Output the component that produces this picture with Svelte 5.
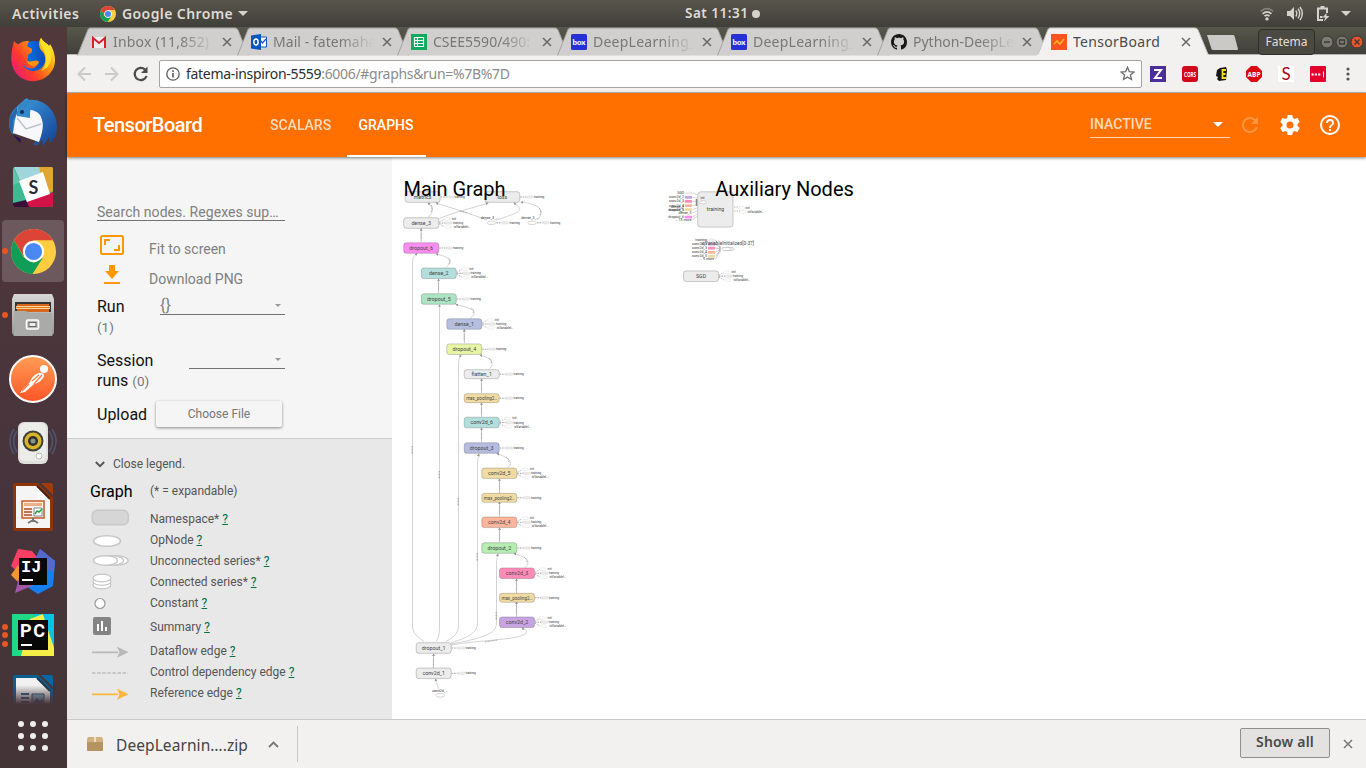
<script>
  const tabs = [
    { icon: 'gmail', title: 'Inbox (11,852) - fatema', ls: 0.2 },
    { icon: 'outlook', title: 'Mail - fatemahasan', ls: 0.05 },
    { icon: 'sheets', title: 'CSEE5590/490: Python', ls: 0 },
    { icon: 'box', title: 'DeepLearning_Lesson', ls: 0.25 },
    { icon: 'box', title: 'DeepLearning_Lesson', ls: 0.25 },
    { icon: 'github', title: 'Python-DeepLearning', ls: 0 },
    { icon: 'tensor', title: 'TensorBoard', ls: 0.3, active: true }
  ];

  const nodes = [
    { t: 'metrics', x: 422.7, y: 197, c: '#ececec', k: 1 },
    { t: 'loss', x: 502.3, y: 197, c: '#ececec', k: 1 },
    { t: 'dense_3', x: 421.2, y: 223, c: '#ececec', k: 3 },
    { t: 'dropout_6', x: 421.2, y: 248, c: '#fb8df0', k: 1 },
    { t: 'dense_2', x: 438.8, y: 273.3, c: '#b2dfdd', k: 3 },
    { t: 'dropout_5', x: 438.8, y: 299, c: '#ade5c4', k: 1 },
    { t: 'dense_1', x: 464.3, y: 324, c: '#b6bfdf', k: 3 },
    { t: 'dropout_4', x: 464.3, y: 349.2, c: '#e7f5a6', k: 1 },
    { t: 'flatten_1', x: 481.7, y: 374.2, c: '#ececec', k: 1, h: 9 },
    { t: 'max_pooling2…', x: 481.7, y: 398.2, c: '#f0dca3', k: 1, h: 9 },
    { t: 'conv2d_6', x: 481.7, y: 422.5, c: '#b2dfdd', k: 3 },
    { t: 'dropout_3', x: 481.7, y: 448, c: '#b5bce0', k: 1 },
    { t: 'conv2d_5', x: 499.3, y: 473.3, c: '#f0dca3', k: 3 },
    { t: 'max_pooling2…', x: 499.3, y: 497.8, c: '#f0dca3', k: 1, h: 9 },
    { t: 'conv2d_4', x: 499.3, y: 522.3, c: '#ffb59c', k: 3 },
    { t: 'dropout_2', x: 499.3, y: 548, c: '#b5edb2', k: 1 },
    { t: 'conv2d_3', x: 517, y: 573.2, c: '#ff8cb8', k: 3 },
    { t: 'max_pooling2…', x: 517, y: 597.8, c: '#f0dca3', k: 1, h: 9 },
    { t: 'conv2d_2', x: 517, y: 622.2, c: '#c8a5e2', k: 3 },
    { t: 'dropout_1', x: 433.7, y: 648, c: '#ececec', k: 1 },
    { t: 'conv2d_1', x: 433.7, y: 673.3, c: '#ececec', k: 1 },
    { t: 'SGD', x: 701, y: 276.2, c: '#ececec', k: 3 }
  ];

  const straight = [
    [421.2, 242, 228.5], [438.5, 293, 279], [464.3, 343, 329.5],
    [481.5, 393, 379], [481.5, 416.5, 403], [481.5, 442, 428],
    [499.5, 493, 479], [499.5, 516.5, 502], [499.5, 542, 528],
    [516.5, 593, 579], [516.5, 616.5, 602], [433.5, 668, 654]
  ];

  const curves = [
    'M428 217.5 C434 211 434 208 428 203',
    'M438 219 C460 210 474 208 488 203',
    'M487 220 C468 213 455 209 436 203',
    'M496 220 C526 211 522 209 514 203',
    'M537 220 C546 211 540 204 521 202',
    'M446 267.5 C453 261 450 257 436 254',
    'M470 318.5 C480 311 471 308 456 304.5',
    'M489 369.5 C496 362 490 358 480 355',
    'M508 467.5 C515 461 506 457 497 453.5',
    'M525 567.5 C532 561 526 557 514 553.5',
    'M424 641.5 C416 636 412.5 632 412.5 626 L412.5 264 C412.5 258 414 256 417 253.5',
    'M436 641.5 C439 638 439.5 632 439.5 626 L439.5 305',
    'M446 641.5 C456 636 458.5 632 458.5 624 L458.5 368 C458.5 360 459 358 461 355',
    'M451 643 C472 636 477.5 632 477.5 622 L477.5 468 C477.5 460 478 457 479 454',
    'M451 644 C490 637 496.5 632 496.5 622 L496.5 568 C496.5 560 497 557 498 554',
    'M451 645 C480 640 517 640 525 634 C529 630 525 630 522 628',
    'M440 692 C437 684 436 682 435.5 679'
  ];

  const edgeMarks = [[412.2, 450], [439.2, 475], [458.2, 502], [477.2, 557], [496.2, 616]];

  const auxA = [
    ['SGD', 193, '#ececec'], ['conv2d_2', 197.3, '#c8a5e2'], ['conv2d_3', 201.3, '#ff8cb8'],
    ['conv2d_4', 205.5, '#ffb59c'], ['conv2d_5', 209.5, '#f0dca3'], ['dense_3', 213, ''],
    ['dropout_6', 217, '#fb8df0'], ['... 15 more', 220, '']
  ];
  const auxB = [
    ['training', 240, '#ececec'], ['conv2d_2', 244, '#c8a5e2'], ['conv2d_3', 248, '#ff8cb8'],
    ['conv2d_4', 252.3, '#ffb59c'], ['conv2d_5', 256.3, '#f0dca3'], ['... 5 more', 259.3, '']
  ];

  const legend = [
    ['ns', 'Namespace*'], ['op', 'OpNode'], ['un', 'Unconnected series*'], ['co', 'Connected series*'],
    ['ct', 'Constant'], ['su', 'Summary'], ['df', 'Dataflow edge'], ['cd', 'Control dependency edge'], ['re', 'Reference edge']
  ];
</script>

{#snippet chromeLogo(s)}
  <svg width={s} height={s} viewBox="0 0 44 44">
    <circle cx="22" cy="22" r="22" fill="#ffcd40" />
    <path d="M22 11 H41 A22 22 0 0 0 3 11 L12.5 27Z" fill="#db4437" />
    <path d="M3 11 A22 22 0 0 0 21 44 L31.5 27.5 22 33 12.5 27.5Z" fill="#0f9d58" />
    <circle cx="22" cy="22" r="10.4" fill="#fff" />
    <circle cx="22" cy="22" r="8.4" fill="#4a89f3" />
  </svg>
{/snippet}

{#snippet closeX(c)}
  <svg width="10" height="10" viewBox="0 0 10 10"><path d="M1 1 L9 9 M9 1 L1 9" stroke={c} stroke-width="1.5" fill="none" /></svg>
{/snippet}

<div class="desktop">
  <header class="topbar">
    <span class="activities">Activities</span>
    <span class="logo">{@render chromeLogo(16)}</span>
    <span class="appname">Google Chrome</span>
    <i class="caret"></i>
    <div class="clock">Sat 11:31<i></i></div>
    <div class="tray">
      <svg width="14" height="14" viewBox="0 0 14 14" fill="none" stroke="#d4d2ce" stroke-width="1.7">
        <path d="M.8 4.4 Q7 -1 13.2 4.4" opacity=".4" /><path d="M2.6 6.8 Q7 3 11.4 6.8" /><path d="M4.5 9.2 Q7 7 9.5 9.2" /><circle cx="7" cy="11.9" r="1.7" fill="#d4d2ce" stroke="none" />
      </svg>
      <svg width="16" height="15" viewBox="0 0 16 15" fill="none" stroke="#d4d2ce" stroke-width="1.4">
        <path d="M0 5h3l4-4v13L3 10H0z" fill="#d4d2ce" stroke="none" /><path d="M8.8 4.5q2 3 0 6M11 2.7q3.4 4.8 0 9.6M13 1q4.6 6.500 0 13" />
      </svg>
      <svg width="14" height="17" viewBox="0 0 14 17" fill="none" stroke="#d4d2ce" stroke-width="2">
        <path d="M7 15H2V3.500h9V8M4.500 2h4" /><path d="M10.500 8 6.500 12.500h2.800l-1.500 4 5.700-5.500h-3z" fill="#d4d2ce" stroke="none" /><path d="M4 12h2.500" />
      </svg>
      <i class="caret"></i>
    </div>
  </header>

  <nav class="dock">
    <div class="app">
      <svg width="46" height="46" viewBox="0 0 46 46">
        <defs>
          <linearGradient id="fx" x1="0" y1=".9" x2="1" y2=".2"><stop offset="0" stop-color="#e31587" /><stop offset=".35" stop-color="#ff3a2d" /><stop offset=".7" stop-color="#ff9a0b" /><stop offset="1" stop-color="#fff23a" /></linearGradient>
          <linearGradient id="fb"><stop offset="0" stop-color="#0a84ff" /><stop offset="1" stop-color="#0a3fa8" /></linearGradient>
        </defs>
        <circle cx="24" cy="22" r="17" fill="url(#fb)" />
        <path d="M4 5 C6 7 8 9 9 8 C12 5 16 5 19 5 L17 10 22 13 22 16 18 19 18 22 C14 27 24 31 28 28 C24 36 13 32 13 26 C12 33 22 37 28 34 C36 31 38 20 31 14 C28 10 29 4 31 2 C33 6 37 7 39 10 L40 8 C46 17 47 29 41 36 C32 49 11 48 4 34 C-1 24 2 13 4 5Z" fill="url(#fx)" />
        <path d="M31 2 C28 9 36 14 36 22 C36 28 34 32 31 35 C43 31 43 18 39 10 C37 7 33 6 31 2Z" fill="#ffe226" />
        <path d="M16 24 C21 28 25 22 29 26 C28 31 19 32 16 24Z" fill="#ff930f" />
      </svg>
    </div>
    <div class="app">
      <svg width="50" height="50" viewBox="0 0 50 50">
        <defs><linearGradient id="tb" x1="0" y1="0" x2="1" y2="1"><stop offset="0" stop-color="#3fa4e6" /><stop offset="1" stop-color="#123f93" /></linearGradient></defs>
        <path d="M1 24 C2 11 12 7 17 1 C20 0 21 1 20 2 C36 0 49 13 49 29 C49 38 45 43 41 45 L41 39 35 48 34 41 30 47 H25 L34 35 4 36 C2 33 1 29 1 24Z" fill="url(#tb)" />
        <path d="M10 9 C18 12 32 10 34 22 C36 28 34 36 31 44 L5 35 7 22 9 15Z" fill="#f8f8fa" />
        <path d="M1 23 C2 17 6 13 9 9 L9 15 5 22 5 35 C3 34 1 29 1 23Z" fill="#2466b0" />
        <path d="M9 20 18 31 33 26" fill="none" stroke="#bbc2ce" stroke-width="1.5" />
        <path d="M9 18 C8 7 15 2 20 2 L31 3 C22 7 22 12 22 20 17 18Z" fill="#3488ca" />
        <circle cx="14" cy="14" r="2" fill="#102f52" /><path d="M5 37 13 41 12 45Z" fill="#251457" />
      </svg>
    </div>
    <div class="app">
      <svg width="40" height="40" viewBox="0 0 40 40">
        <defs><clipPath id="sl"><rect width="40" height="40" rx="2" /></clipPath></defs>
        <g clip-path="url(#sl)"><path fill="#3eb991" d="M0 0h40v40H0z" /><path d="M1 0H28L32 10 8 16Z" fill="#9ed6dc" /><path d="M26 0h14v24l-7 3z" fill="#dfa630" /><path d="M14 34 40 25v15H13z" fill="#d21347" /><path d="M0 36 13 33 16 40H0z" fill="#380d38" /><path d="M0 0 7 15 0 18z" fill="#60c4aa" /><path d="M6 14 30 5 37 27 14 35z" fill="#fff" /></g>
        <text x="20.500" y="26.500" text-anchor="middle" class="slack">S</text>
      </svg>
    </div>
    <div class="app selected"><b class="dots"><i></i></b>{@render chromeLogo(45)}</div>
    <div class="app"><b class="dots"><i></i></b>
      <svg width="42" height="44" viewBox="0 0 42 44">
        <defs><linearGradient id="fi" x2="0" y2="1"><stop offset="0" stop-color="#d8d8d8" /><stop offset="1" stop-color="#969696" /></linearGradient></defs>
        <path d="M2 1h38l2 5v34l-2 3H2l-2-3V6z" fill="url(#fi)" /><path d="M3 9h36v10H3z" fill="#353535" /><path d="M5 11h32v8H5z" fill="#d6661a" /><path d="M4 13h34v3H4z" fill="#ffd59c" /><path d="M4 14.500h34" stroke="#ee7a22" /><path d="M2 18h12l4 2h22v23H2z" fill="#aaaaa9" /><rect x="14.500" y="27" width="12" height="9" rx="1.500" fill="#bbb" stroke="#fff" stroke-width="1.600" /><rect x="17" y="29.500" width="7" height="4" fill="#eee" stroke="#666" />
      </svg>
    </div>
    <div class="app">
      <svg width="48" height="48" viewBox="0 0 48 48">
        <defs><linearGradient id="po" x2="0" y2="1"><stop offset="0" stop-color="#ff9e55" /><stop offset="1" stop-color="#ff5527" /></linearGradient></defs>
        <circle cx="24" cy="24" r="23" fill="url(#po)" stroke="#fff" stroke-width="2" /><circle cx="35" cy="14" r="4" fill="#fff" /><path d="M32 18 C27 17 22 23 21 27 L13 35 11 38 16 37 25 29 C31 28 36 22 35 19Z" fill="#fff" /><path d="M33 20 25 29 M30 20 23 26 M20 29 13 36" stroke="#ff793f" stroke-width="1.200" />
      </svg>
    </div>
    <div class="app">
      <svg width="50" height="44" viewBox="0 0 50 44">
        <path d="M6 8Q-2 20 6 33M9 10Q2 20 9 31M44 8q8 12 0 25M41 10q7 10 0 21" fill="none" stroke="#4d6583" stroke-width="1.500" opacity=".7" /><rect x="10" y="1" width="30" height="42" rx="6" fill="#dfdfdc" /><rect x="12" y="2" width="26" height="38" rx="5" fill="#ecece9" /><circle cx="25" cy="20" r="10.500" fill="#404040" /><circle cx="25" cy="20" r="8.500" fill="#d8b528" /><circle cx="25" cy="20" r="5" fill="#31312e" /><circle cx="25" cy="20" r="2.500" fill="#88958c" /><circle cx="31" cy="35" r="3" fill="#fff" stroke="#bbb" />
      </svg>
    </div>
    <div class="app">
      <svg width="40" height="48" viewBox="0 0 40 48">
        <path d="M2 0h23l15 15v33H2q-2 0-2-2V2q0-2 2-2z" fill="#8e3507" /><path d="M28 0h10q2 0 2 2v10z" fill="#9e3c0c" /><path d="M3 3h21l13 13v29H3z" fill="#f5f5f5" /><path d="M24 3v13h13z" fill="#fff" /><path d="m24 3 13 13" stroke="#472018" stroke-width="2" /><path d="M9 18h22v17H9z" fill="#fff1e9" stroke="#c85722" stroke-width="1.500" /><path d="M11 20h18v3H11z" fill="#edb086" /><path d="M11 26h8m-8 3h8m-8 3h8" stroke="#a94d25" stroke-width="1.500" /><path d="M21 25h8v8h-8z" fill="#fff" stroke="#789" /><path d="m22 31 2-3 2 1 3-3" stroke="#28a23d" stroke-width="1.500" fill="none" /><path d="M20 35v2m0 0-5 3m5-3 5 3" stroke="#777" stroke-width="2" />
      </svg>
    </div>
    <div class="app">
      <svg width="46" height="46" viewBox="0 0 46 46">
        <path d="M1 18 8 1 22 3 28 10 15 30z" fill="#ff3e66" /><path d="M8 17 1 27 8 34 12 25z" fill="#f39632" /><path d="M30 1 45 13 43 38 28 46 14 37z" fill="#167ff0" /><path d="M30 1 45 13 44 23 20 22z" fill="#5369ce" /><path d="M10 26 5 45 24 37z" fill="#a457a7" /><path d="M9 10h28v27H9z" fill="#080808" /><text x="11" y="24" class="jb mono">IJ</text><path d="M12 32h11" stroke="#fff" stroke-width="2" />
      </svg>
    </div>
    <div class="app"><b class="dots"><i></i><i></i><i></i></b>
      <svg width="42" height="42" viewBox="0 0 42 42">
        <path fill="#21d789" d="M0 0h42v42H0z" /><path d="M21 0h21v30z" fill="#09ccd4" /><path d="M18 5 31 0 42 32v10H9z" fill="#f5ed48" /><path d="M31 0h11v34z" fill="#07c3e8" /><path d="M6 6h30v30H6z" fill="#080808" /><text x="8" y="22.500" class="jb" textLength="25">PC</text><path d="M9 31h11" stroke="#fff" stroke-width="2" />
      </svg>
    </div>
    <div class="peek">
      <svg width="40" height="29" viewBox="0 0 40 29">
        <defs><linearGradient id="wf" x2="0" y2="1"><stop offset=".35" stop-color="#47343a" stop-opacity="0" /><stop offset="1" stop-color="#47343a" /></linearGradient></defs>
        <path d="M2 0h23l15 15v14H0V2q0-2 2-2z" fill="#0c5f92" /><path d="M28 0h10q2 0 2 2v10z" fill="#0767a3" /><path d="M3 3h21l13 13v13H3z" fill="#f1f1f1" /><path d="m24 3 13 13" stroke="#253746" stroke-width="2" /><path d="M8 19h8m-8 4h8m-8 4h8" stroke="#245d8a" stroke-width="2" /><path d="M19 19h12v10H19z" fill="#8cc0dc" stroke="#26577a" /><path d="m20 28 4-5 3 3 2-2 2 4z" fill="#34495b" /><path d="M0 0h40v29H0z" fill="url(#wf)" />
      </svg>
    </div>
    <div class="grid9">{#each Array(9) as _}<i></i>{/each}</div>
  </nav>

  <main class="browser">
    <div class="tabstrip">
      {#each tabs as t}
        <div class="tab" class:active={t.active}>
          <svg class="shape" width="174" height="29" viewBox="0 0 174 29">
            <path d="M0.500 28.500 L11 2.500 Q12 1 13 1 H158 Q160 1 161 3 L171.500 28.500" fill={t.active ? '#f2f1f0' : '#d1cfcd'} stroke={t.active ? '#c5c3c0' : '#a4a29e'} />
            {#if t.active}<path d="M0 27.500h172v1.500H0z" fill="#f2f1f0" />{/if}
          </svg>
          <span class="fav">
            {#if t.icon === 'gmail'}
              <svg width="16" height="16"><path d="M1 3h14v11H1z" fill="#eee" /><path d="M2 14V4L8 9l6-5v10" fill="none" stroke="#d9202f" stroke-width="2" /></svg>
            {:else if t.icon === 'outlook'}
              <svg width="16" height="16"><path d="M8 3h7.500v10H8z" fill="#fff" stroke="#0a5fc4" /><path d="M0 1.500 10 0v16L0 14.500z" fill="#0557bd" /><ellipse cx="5" cy="8" rx="2.100" ry="3" fill="none" stroke="#fff" stroke-width="1.500" /><path d="m9 6 2.500 3L15 5" fill="none" stroke="#0a5fc4" stroke-width="1.300" /></svg>
            {:else if t.icon === 'sheets'}
              <svg width="16" height="16"><path fill="#0faa5b" d="M0 0h16v16H0z" /><path d="M3.500 3.500h9v9h-9zm3 0v9M3.500 6.500h9m-9 3h9" fill="none" stroke="#fff" stroke-width="1.200" /></svg>
            {:else if t.icon === 'box'}
              <svg width="16" height="16"><rect width="16" height="16" rx="1.500" fill="#2531d4" /><text x="1.500" y="11" class="boxt" textLength="13" lengthAdjust="spacingAndGlyphs">box</text></svg>
            {:else if t.icon === 'github'}
              <svg width="16" height="16" viewBox="0 0 16 16"><path fill="#191717" d="M8 0C3.580 0 0 3.580 0 8c0 3.540 2.290 6.530 5.470 7.590.4.070.550-.170.550-.380 0-.190-.010-.820-.010-1.490-2.010.370-2.530-.490-2.690-.940-.090-.230-.480-.940-.820-1.130-.280-.150-.680-.520-.010-.530.630-.010 1.080.580 1.230.820.720 1.210 1.870.870 2.330.660.070-.520.280-.870.510-1.070-1.780-.200-3.640-.890-3.640-3.950 0-.870.310-1.590.820-2.150-.080-.200-.360-1.020.080-2.120 0 0 .670-.210 2.200.820.640-.180 1.320-.270 2-.270s1.360.090 2 .270c1.530-1.040 2.200-.820 2.200-.820.440 1.100.160 1.920.080 2.120.510.560.820 1.270.820 2.150 0 3.070-1.870 3.750-3.650 3.950.290.250.540.730.540 1.480 0 1.070-.010 1.930-.010 2.200 0 .210.150.460.550.380A8.010 8.010 0 0 0 16 8c0-4.420-3.580-8-8-8z" /></svg>
            {:else}
              <svg width="16" height="16"><path fill="#ff5322" d="M0 0h16v16H0z" /><path d="m3 10 3-3 3 3 4-5" fill="none" stroke="#ffb61c" stroke-width="1.700" /></svg>
            {/if}
          </span>
          <span class="title" style:letter-spacing="{t.ls}px">{t.title}</span>
          <span class="x">{@render closeX('#686868')}</span>
        </div>
      {/each}
      <svg class="newtab" width="33" height="17"><path d="M1 1h26q1 0 1.500 1L32 15q0 1-1 1H7q-1 0-1.500-1z" fill="#cbc9c6" /></svg>
      <span class="user">Fatema</span>
      <svg class="wm" width="44" height="14" viewBox="0 0 44 14"><g stroke="#383732"><circle cx="7" cy="7" r="6" fill="#7b7973" /><circle cx="22" cy="7" r="6" fill="#7b7973" /><circle cx="37" cy="7" r="6" fill="#e9532d" /></g><path d="M4 7h6M19.500 5h5v4h-5zM34.500 4.500l5 5m0-5-5 5" fill="none" stroke="#3d3a34" stroke-width="1.300" /></svg>
    </div>

    <div class="toolbar">
      <svg class="nav" width="84" height="20" viewBox="0 0 84 20" fill="none">
        <path d="M18 10H5.500M12 3.500 5.500 10 12 16.500" stroke="#cccac9" stroke-width="2" /><path d="M32 10h12.500M38 3.500 44.500 10 38 16.500" stroke="#cccac9" stroke-width="2" /><path d="M72 5.500A6.100 6.100 0 1 0 73.600 12" stroke="#4c4b4a" stroke-width="2.200" /><path d="M74.500 2.500V9H68z" fill="#4c4b4a" />
      </svg>
      <div class="omni">
        <svg width="14" height="14" viewBox="0 0 14 14"><circle cx="7" cy="7" r="6.200" fill="none" stroke="#5a5a5a" stroke-width="1.300" /><path d="M7 6v4.500M7 3.300V5" stroke="#5a5a5a" stroke-width="1.600" /></svg>
        <span class="url"><b>fatema-inspiron-5559</b>:6006/#graphs&run=%7B%7D</span>
        <svg width="15" height="15" viewBox="0 0 15 15"><path d="m7.500 1.300 1.800 4.300 4.700.4-3.600 3 1.100 4.500-4-2.400-4 2.400L4.600 9 1 6l4.700-.4z" fill="none" stroke="#6e6e6e" stroke-width="1.300" /></svg>
      </div>
      <div class="exts">
        <svg width="16" height="16"><path fill="#4b2e9b" d="M0 0h16v16H0z" /><path d="M4 4h7L5 12h7" fill="none" stroke="#fff" stroke-width="2" /></svg>
        <svg width="16" height="16"><rect width="16" height="16" rx="3" fill="#d3081b" /><text x="8" y="10.500" text-anchor="middle" class="ext" textLength="12" lengthAdjust="spacingAndGlyphs">CORS</text></svg>
        <svg width="16" height="16"><path d="M6 2 12 1l1 3-1 10-7 1-2-2 1-2-2-1 1-6z" fill="#171717" /><path d="M12 4H8.500v8H12M8.500 8h3" fill="none" stroke="#f8df1a" stroke-width="1.800" /></svg>
        <svg width="16" height="16"><path d="M5 0h6l5 5v6l-5 5H5l-5-5V5z" fill="#d90813" /><text x="8" y="11" text-anchor="middle" class="ext" textLength="13" lengthAdjust="spacingAndGlyphs">ABP</text></svg>
        <svg width="16" height="16"><path fill="#fff" d="M0 0h16v16H0z" /><text x="8" y="14" text-anchor="middle" class="exs">S</text></svg>
        <svg width="16" height="16"><rect width="16" height="16" rx="1" fill="#e4002b" /><path d="M1.500 8.500h2.200m1.100 0H7m1.100 0h2.200" stroke="#fff" stroke-width="2.200" /><path d="M13.500 5.500v6" stroke="#fff" /></svg>
      </div>
      <svg class="kebab" width="4" height="14" fill="#555"><circle cx="2" cy="2" r="1.600" /><circle cx="2" cy="7" r="1.600" /><circle cx="2" cy="12" r="1.600" /></svg>
    </div>

    <div class="tbhead">
      <h1>TensorBoard</h1>
      <span class="ttab">SCALARS</span>
      <span class="ttab on">GRAPHS</span>
      <div class="reload"><span>INACTIVE</span><i></i></div>
      <svg width="24" height="24" viewBox="0 0 24 24" fill="#fff" opacity=".26"><path d="M17.650 6.350A7.960 7.960 0 0 0 12 4a8 8 0 1 0 7.730 10h-2.080A6 6 0 1 1 12 6c1.660 0 3.140.690 4.220 1.780L13 11h7V4z" /></svg>
      <svg width="24" height="24" viewBox="0 0 24 24" fill="#fff"><path d="M19.430 12.980c.040-.320.070-.640.070-.980s-.030-.660-.070-.980l2.110-1.650c.190-.150.240-.420.120-.640l-2-3.460c-.120-.220-.390-.300-.610-.220l-2.490 1c-.520-.400-1.080-.730-1.690-.980l-.380-2.650A.488.488 0 0 0 14 2h-4c-.250 0-.460.180-.490.420l-.380 2.650c-.610.250-1.170.590-1.690.980l-2.490-1c-.230-.090-.490 0-.610.220l-2 3.460c-.130.220-.070.490.120.640l2.110 1.650c-.040.320-.070.650-.070.980s.030.660.070.980l-2.110 1.650c-.190.150-.240.420-.120.640l2 3.460c.120.220.390.300.610.220l2.490-1c.520.400 1.080.730 1.690.980l.380 2.650c.030.240.240.420.490.420h4c.250 0 .460-.180.490-.420l.380-2.650c.610-.250 1.170-.590 1.690-.980l2.490 1c.230.090.490 0 .610-.220l2-3.460c.120-.220.070-.490-.120-.640zM12 15.500a3.500 3.500 0 1 1 0-7 3.500 3.500 0 0 1 0 7z" /></svg>
      <svg width="24" height="24" viewBox="0 0 24 24" fill="#fff"><path d="M11 18h2v-2h-2zm1-16a10 10 0 1 0 0 20 10 10 0 0 0 0-20zm0 18a8 8 0 1 1 0-16 8 8 0 0 1 0 16zm0-14a4 4 0 0 0-4 4h2a2 2 0 1 1 4 0c0 2-3 1.750-3 5h2c0-2.250 3-2.500 3-5a4 4 0 0 0-4-4z" /></svg>
    </div>

    <div class="body">
      <aside>
        <section class="controls">
          <div class="search">Search nodes. Regexes sup…</div>
          <div class="action"><span class="ic"><svg width="24" height="20" viewBox="0 0 24 20"><rect x="1" y="1" width="22" height="18" rx="1.500" fill="none" stroke="#ff9800" stroke-width="2" /><path d="M5 10V5h5M19 10v5h-5" fill="none" stroke="#ff9800" stroke-width="2" /></svg></span><span>Fit to screen</span></div>
          <div class="action"><span class="ic dl"><svg width="16" height="20" viewBox="0 0 16 20" fill="#ff9800"><path d="M5 0h6v6h4l-7 8-7-8h4zM0 17h16v2H0z" /></svg></span><span>Download PNG</span></div>
          <div class="field run"><div class="lab">Run<br /><small>(1)</small></div><div class="select w1">{'{}'}<i></i></div></div>
          <div class="field ses"><div class="lab">Session<br />runs <small>(0)</small></div><div class="select w2"><i></i></div></div>
          <div class="upload"><span>Upload</span><button>Choose File</button></div>
        </section>
        <section class="legend">
          <div class="close"><svg width="10" height="7" viewBox="0 0 10 7"><path d="m.800 1 4.200 4.200L9.200 1" fill="none" stroke="#555" stroke-width="1.800" /></svg>Close legend.</div>
          <div class="ghead"><b>Graph</b><span>(* = expandable)</span></div>
          {#each legend as [k, label]}
            <div class="row" class:tall={k === 'su'}>
              <svg width="42" height="21" viewBox="0 0 42 21">
                {#if k === 'ns'}<rect x="2.300" y="1.200" width="36" height="14.600" rx="5" fill="#d6d6d6" stroke="#c8c8c8" stroke-width="1.500" />
                {:else if k === 'op'}<ellipse cx="17" cy="11" rx="13.500" ry="5.300" fill="#fff" stroke="#c8c8c8" stroke-width="1.600" />
                {:else if k === 'un'}{#each [26, 21.500, 15.500] as cx}<ellipse {cx} cy="9.500" rx="12" ry="4.700" fill="#fff" stroke="#c8c8c8" stroke-width="1.400" />{/each}
                {:else if k === 'co'}{#each [13, 9.500, 6] as cy}<ellipse cx="12" {cy} rx="9" ry="3.800" fill="#fff" stroke="#c4c4c4" stroke-width="1.200" />{/each}
                {:else if k === 'ct'}<circle cx="10" cy="10.500" r="5" fill="#fff" stroke="#999" stroke-width="1.200" />
                {:else if k === 'su'}<rect x="3" y="0" width="18" height="18" rx="2" fill="#848484" /><path d="M8 7v7m4-10v10m4-4v4" stroke="#fff" stroke-width="2" />
                {:else if k === 'cd'}<path d="M2 11h36" stroke="#bcbcbc" stroke-width="1.500" stroke-dasharray="3.500 1.600" />
                {:else}<g fill={k === 'df' ? '#b8b8b8' : '#ffb43a'}><path d="M2 10.500h26v1.700H2z" /><path d="m27 5.800 11.500 5.500L27 16.800l2.500-5.500z" /></g>{/if}
              </svg>
              <span>{label} <u>?</u></span>
            </div>
          {/each}
        </section>
      </aside>

      <svg class="graph" viewBox="392 157 974 562" width="974" height="562">
        <defs><marker id="ar" viewBox="0 0 4 4" refX="3" refY="2" markerWidth="3" markerHeight="3" markerUnits="userSpaceOnUse" orient="auto"><path d="M0 0 4 2 0 4z" fill="#999" /></marker></defs>
        <g fill="none" stroke="#c8c8c8" stroke-width=".8">
          {#each curves as d}<path {d} marker-end="url(#ar)" />{/each}
          {#each straight as [x, a, b]}<path d="M{x} {a}V{b}" stroke="#b4b4b4" marker-end="url(#ar)" /><path d="M{x} {a - 3}V{b + 4}" stroke="#999" stroke-width="1.200" stroke-dasharray="1 .6" opacity=".5" />{/each}
          {#each edgeMarks as [x, y]}<path d="M{x} {y - 4}v8" stroke="#999" stroke-width="1" stroke-dasharray="1 .5" />{/each}
          <path d="M431 212q2-4 0-7M460 211l8 2M485 642l12-2M449 264q3-3-1-6M473 313q2-3-2-5M491 363q1-3-2-5M509 462q0-3-3-5M527 562q0-3-3-5M540 215q2-4-1-7" stroke="#999" stroke-dasharray="1 .6" stroke-width=".9" />
        </g>
        {#each nodes as n}
          {@const h = n.h ?? 10.6}
          <rect x={n.x - 17.500} y={n.y - h / 2} width="35" height={h} rx="2.600" fill={n.c} stroke="#000" stroke-opacity=".24" stroke-width=".8" />
          <text x={n.x} y={n.y + 1.700} class="nt" text-anchor="middle" font-size={n.h && n.t[0] === 'm' ? 4.500 : 5.300}>{n.t}</text>
          <path d="M{n.x + 18} {n.y}h6" stroke="#777" stroke-width=".7" stroke-dasharray="1.500 1" />
          <rect x={n.x + 24} y={n.y - 1.100} width="7" height="2.200" rx=".8" fill="#eee" stroke="#ccc" stroke-width=".4" />
          <text x={n.x + 31.700} y={n.y + 1} class="mini">training</text>
          {#if n.k === 3}
            <path d="M{n.x + 18} {n.y - 1}l5-2.800M{n.x + 18} {n.y + 1}l5 2.800" stroke="#888" stroke-width=".6" stroke-dasharray="1.500 1" />
            <ellipse cx={n.x + 26} cy={n.y - 4} rx="3.300" ry="1.400" class="ov" /><ellipse cx={n.x + 27} cy={n.y + 4} rx="3.300" ry="1.400" class="ov" />
            <text x={n.x + 30.500} y={n.y - 3.200} class="mini">init</text><text x={n.x + 32.500} y={n.y + 5} class="mini">isVariableI…</text>
          {/if}
        {/each}
        {#each [[491.500, 222.800], [532, 222.800]] as [x, y]}
          <text x={x - 2} y={y - 4} text-anchor="middle" class="mini big">dense_3_…</text><ellipse cx={x} cy={y} rx="4.300" ry="1.800" class="ov dk" />
          <path d="M{x + 5} {y}h5" stroke="#777" stroke-width=".7" stroke-dasharray="1.500 1" /><rect x={x + 10} y={y - 1.100} width="7" height="2.200" rx=".8" fill="#eee" stroke="#ccc" stroke-width=".4" /><text x={x + 18} y={y + 1} class="mini">training</text>
        {/each}
        <text x="440" y="692.300" text-anchor="middle" class="mini big">conv2d_…</text><ellipse cx="440.300" cy="695.300" rx="4.400" ry="1.900" class="ov dk" />

        <rect x="697.700" y="191.800" width="35.300" height="35.300" rx="3" fill="#ececec" stroke="#bdbdbd" stroke-width=".8" />
        <text x="715.500" y="211" text-anchor="middle" class="nt" font-size="5.200">training</text>
        <text x="702.500" y="198.800" text-anchor="middle" class="mini">init</text><ellipse cx="703" cy="202.300" rx="3.500" ry="1.500" class="ov dk" />
        {#each auxA as [t, y, c]}
          {#if c}<rect x="684.800" y={y - 1.200} width="7.200" height="2.600" rx=".5" fill={c} />{/if}
          <text x={c ? 684 : 691.500} y={y + 1} text-anchor="end" class="mini aux">{t}</text>
          <path d="M692.500 {y}L697 {202 + (y - 202) * 0.800}" stroke="#aaa" stroke-width=".5" />
        {/each}
        <path d="M696.500 199v7" stroke="#888" stroke-width="1.500" />
        <text x="684" y="207.500" text-anchor="end" class="mini aux">dense_1</text><text x="684" y="211" text-anchor="end" class="mini aux">dropout_1</text>
        {#each [[208, 'init'], [212, 'isVariableI…']] as [y, t], i}
          <path d="M734 {y - 1}h6" stroke="#888" stroke-width=".6" stroke-dasharray="1.500 1" /><ellipse cx={742 + i} cy={y} rx="3.300" ry="1.400" class="ov" /><text x={745.500 + i * 2} y={y + 1} class="mini">{t}</text>
        {/each}
        {#each auxB as [t, y, c]}
          {#if c}<rect x="708" y={y - 1.200} width="7.200" height="2.600" rx=".5" fill={c} />{/if}
          <text x={c ? 707 : 714} y={y + 1} text-anchor="end" class="mini aux">{t}</text>
          <path d="M715.500 {y}L720 {249 + (y - 249) * 0.200}" stroke="#aaa" stroke-width=".6" fill="none" />
        {/each}
        <path d="M720 246.500v5" stroke="#999" stroke-width="1" />
        <g class="ov dk"><ellipse cx="730" cy="249" rx="4.300" ry="1.700" /><ellipse cx="728" cy="249" rx="4.300" ry="1.700" /><ellipse cx="726" cy="249" rx="4.300" ry="1.700" /></g>
        <text x="701.500" y="245.300" class="nt" font-size="4.700" textLength="52.500">isVariableInitialized[0-37]</text>
        <text x="403.500" y="196" class="gtitle" textLength="102">Main Graph</text>
        <text x="715.300" y="196" class="gtitle" textLength="138.500">Auxiliary Nodes</text>
      </svg>
    </div>

    <footer>
      <svg width="16" height="16" viewBox="0 0 16 16"><path d="M1 1h14l1 4v9q0 1-1 1H1q-1 0-1-1V5z" fill="#b59462" /><path d="M1 1h14l1 5H0z" fill="#d1b281" /><path d="M7 1h2v5H7z" fill="#f0dfbd" /></svg>
      <span class="file">DeepLearnin….zip</span>
      <svg width="11" height="7" viewBox="0 0 11 7"><path d="m1 6 4.500-4.500L10 6" fill="none" stroke="#777" stroke-width="1.800" /></svg>
      <i class="sep"></i>
      <button class="showall">Show all</button>
      {@render closeX('#777')}
    </footer>
  </main>
</div>

<style>
  :global(body) { margin: 0; overflow: hidden; }
  .desktop { width: 1366px; height: 768px; display: grid; grid-template: 27px 741px / 67px 1299px; font-family: "Noto Sans", "Open Sans", sans-serif; background: #fff; overflow: hidden; }
  svg { display: block; flex: none; }
  .topbar { grid-column: 1 / 3; display: grid; grid-template-columns: 100px 21px 126px auto 1fr auto; align-items: center; background: linear-gradient(#59554c, #403f3a); color: #dfdbd2; font-size: 14px; font-weight: 600; position: relative; white-space: nowrap; }
  .activities { padding-left: 12px; letter-spacing: .5px; }
  .appname { padding-left: 1px; letter-spacing: .4px; }
  .topbar .caret, .tray .caret { width: 0; border: 5px solid transparent; border-top-color: #d4d2ce; border-bottom: 0; }
  .topbar .caret { margin-left: -9px; }
  .clock { position: absolute; left: 685px; top: 4px; display: flex; align-items: center; gap: 4px; font-size: 13.500px; line-height: 19px; letter-spacing: .5px; }
  .clock i { width: 8px; height: 8px; border-radius: 50%; background: #d4d2ce; }
  .tray { grid-column: 6; display: flex; align-items: center; gap: 13px; padding-right: 15px; }
  .tray .caret { margin-left: -2px; }
  .dock { background: linear-gradient(#50383b, #48343c 60%, #433436); display: grid; grid-template-rows: repeat(10, 64px) 37px 64px; justify-items: center; }
  .app { width: 67px; height: 64px; display: flex; align-items: center; justify-content: center; position: relative; padding-right: 1px; box-sizing: border-box; }
  .app.selected::before { content: ''; position: absolute; inset: 1px 3px 1px 2px; background: #6c595e; border-radius: 4px; }
  .app svg { position: relative; }
  .dots { position: absolute; left: 2px; top: 0; height: 64px; display: flex; flex-direction: column; justify-content: center; gap: 2.500px; z-index: 1; }
  .dots i { width: 6px; height: 6px; background: #e95420; border-radius: 50%; }
  .peek { padding: 8px 1px 0 0; }
  .grid9 { display: grid; grid-template-columns: repeat(3, 6px); gap: 6px; align-content: center; padding-right: 1px; }
  .grid9 i { height: 6px; background: #eee; border-radius: 50%; }
  .slack { font: bold 18px Lato, sans-serif; fill: #2b2b33; }
  .jb { font: bold 18px Roboto, sans-serif; fill: #fff; }
  .mono { font: bold 17px "Liberation Mono", monospace; }
  .boxt { font: 900 7.500px Lato, sans-serif; fill: #fff; }
  .ext { font: bold 7px "Open Sans", sans-serif; fill: #fff; }
  .exs { font: 17px Lato, sans-serif; fill: #a00620; }

  .browser { display: grid; grid-template-rows: 28px 38px 64px 562px 49px; }
  .tabstrip { display: flex; background: linear-gradient(#57584b, #403f3a); border-bottom: 1px solid #b5b3b0; height: 27px; padding-left: 10px; align-items: flex-start; }
  .tab { width: 160px; height: 29px; display: flex; align-items: center; padding-left: 14px; box-sizing: border-box; position: relative; z-index: 0; color: #777; font-size: 14px; }
  .tab.active { z-index: 2; color: #4b4b4b; }
  .shape { position: absolute; left: 0; top: 0; z-index: -1; }
  .fav { margin-right: 6px; }
  .title { width: 103px; flex: none; overflow: hidden; white-space: nowrap; mask-image: linear-gradient(90deg, #000 66%, transparent 98%); font-size: 14px; }
  .active .title { mask-image: none; }
  .x { margin-left: 1px; position: relative; left: 5px; }
  .active .x { left: 4px; }
  .newtab { margin: 7px 0 0 9px; }
  .user { margin: 2px 0 0 19px; width: 57px; height: 26px; box-sizing: border-box; border: 1px solid #2f2e2a; border-radius: 4px; color: #e2dfd8; font-size: 12px; line-height: 24px; text-align: center; background: #4a4942; }
  .wm { margin: 8px 0 0 5px; }
  .toolbar { background: #f2f1f0; display: flex; align-items: center; border-bottom: 1px solid #bdbab7; }
  .nav { margin-left: 6px; margin-right: 2px; }
  .omni { width: 983px; height: 28px; box-sizing: border-box; border: 1px solid #a6a4a1; border-radius: 2px; background: #fff; display: flex; align-items: center; padding: 0 6px; }
  .url { flex: 1; margin-left: 6px; color: #8b8b8b; font-size: 14px; letter-spacing: -.31px; }
  .url b { font-weight: 400; color: #2d2d2d; }
  .exts { display: flex; gap: 16px; margin-left: 8px; }
  .kebab { margin-left: 20px; }

  .tbhead { background: #ff7000; display: flex; align-items: center; font-family: Roboto, sans-serif; color: #fff; position: relative; z-index: 2; box-shadow: 0 1px 3px rgba(0, 0, 0, .5); }
  h1 { font-size: 20px; font-weight: 500; margin: 0 0 0 26px; width: 165px; letter-spacing: -.5px; font-family: Roboto, sans-serif; }
  .ttab { font-size: 14px; font-weight: 500; height: 64px; line-height: 65px; padding: 0 12px; box-sizing: border-box; opacity: .75; width: 88.500px; white-space: nowrap; }
  .ttab.on { opacity: 1; width: 79.500px; border-bottom: 2px solid #fff; }
  .reload { margin-left: auto; width: 140px; height: 25px; border-bottom: 1px solid #ffd4b2; display: flex; align-items: center; justify-content: space-between; font-size: 14px; font-weight: 500; color: #ffd9bb; margin-right: 8px; padding-bottom: 1px; box-sizing: border-box; }
  .reload i { border: 5px solid transparent; border-top-color: #fff; border-bottom: 0; margin-right: 7px; }
  .tbhead > svg { margin-right: 16px; }
  .tbhead > svg:last-child { margin-right: 24px; }

  .body { display: grid; grid-template-columns: 325px 974px; font-family: Roboto, sans-serif; }
  aside { display: grid; grid-template-rows: 281px 281px; }
  .controls { background: #f5f5f5; padding: 46px 0 0 30px; box-sizing: border-box; color: #808080; }
  .search { width: 188px; height: 18px; line-height: 19px; border-bottom: 1px solid #737373; font-size: 14px; white-space: nowrap; letter-spacing: .05px; box-sizing: border-box; }
  .action { height: 30px; display: flex; align-items: center; font-size: 14px; position: relative; top: 12.500px; }
  .action .ic { width: 52px; padding-left: 3px; box-sizing: border-box; margin-top: -8px; }
  .action .dl { padding-left: 7px; }
  .field { display: flex; justify-content: space-between; width: 188px; }
  .run { margin-top: 16px; height: 54px; }
  .ses { height: 50px; }
  .lab { font-size: 16px; line-height: 20px; color: #111; }
  .lab small { font-size: 13.500px; color: #777; }
  .select { height: 18px; border-bottom: 1px solid #737373; display: flex; align-items: center; justify-content: space-between; font-size: 16px; box-sizing: border-box; }
  .w1 { width: 125px; } .w2 { width: 96px; }
  .select i { margin-left: auto; margin-right: 4px; border: 3.500px solid transparent; border-top-color: #999; border-bottom: 0; }
  .upload { display: flex; align-items: center; height: 26px; font-size: 16px; color: #111; }
  .upload span { width: 59px; }
  .upload button { width: 126px; height: 26px; border: 0; border-radius: 2px; background: #f5f5f5; box-shadow: 0 1px 3px rgba(0, 0, 0, .45); font: 12px Roboto, sans-serif; color: #777; padding: 0; }
  .legend { background: #e8e8e8; border-top: 1px solid #ccc; padding-top: 11px; font-size: 12px; color: #555; }
  .close { height: 28px; display: flex; align-items: center; gap: 8px; padding-left: 28px; }
  .ghead { height: 26px; display: flex; align-items: center; margin-bottom: 4.500px; padding-left: 23px; }
  .ghead b { font-size: 16px; font-weight: 400; color: #000; width: 60px; }
  .row { height: 21px; display: flex; align-items: center; padding-left: 23px; }
  .row span { margin-left: 18px; }
  .row.tall { height: 27px; }
  .row u { color: #00703c; }
  .graph { background: #fff; }
  .nt { font-family: Roboto, sans-serif; fill: #444; }
  .mini { font: 3.100px Roboto, sans-serif; fill: #333; }
  .big { font-size: 3.600px; }
  .aux { font-size: 3.500px; }
  .ov { fill: #fff; stroke: #ddd; stroke-width: .5px; }
  .dk { stroke: #aaa; }
  .gtitle { font: 20px Roboto, sans-serif; fill: #000; }

  footer { background: #f2f1f0; border-top: 1px solid #cbcac8; box-sizing: border-box; display: flex; align-items: center; padding: 0 13px 0 20px; }
  .file { margin-left: 13px; width: 132px; margin-right: 20px; font-size: 15.500px; line-height: 22px; padding-top: 1px; color: #444; white-space: nowrap; letter-spacing: .08px; }
  .sep { width: 1px; height: 36px; background: #c8c6c4; margin-left: 18px; }
  .showall { margin-left: auto; margin-right: 13px; width: 90px; height: 30px; border: 1px solid #908e8b; border-radius: 2px; background: #e3e2e1; font: 600 14px "Noto Sans", sans-serif; line-height: 26px; letter-spacing: .2px; color: #4a4a4a; padding: 0 0 2px; position: relative; top: -1px; }
</style>
